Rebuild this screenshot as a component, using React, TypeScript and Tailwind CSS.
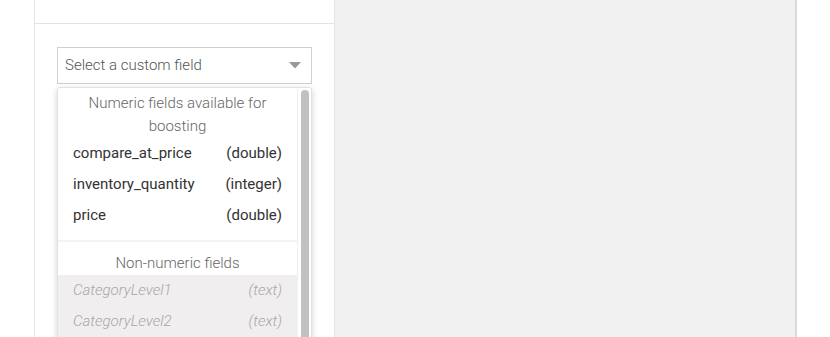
import React from "react";

const numeric = [
  { name: "compare_at_price", type: "(double)" },
  { name: "inventory_quantity", type: "(integer)" },
  { name: "price", type: "(double)" },
];

const other = [
  { name: "CategoryLevel1", type: "(text)" },
  { name: "CategoryLevel2", type: "(text)" },
];

export default function App() {
  return (
    <div
      className="flex w-[830px] h-[337px] overflow-hidden bg-white text-[#333]"
      style={{ fontFamily: "Roboto, 'Liberation Sans', sans-serif" }}
    >
      <div className="w-[34px] shrink-0" />

      {/* settings panel */}
      <div className="w-[301px] shrink-0 border-l border-r border-[#e6e6e6] bg-white">
        <div className="h-[24px] border-b border-[#e3e3e3]" />
        <div className="pt-[23px] pl-[22px]">
          <div className="relative w-[255px]">
            <div className="flex h-[37px] items-center justify-between border border-[#cfcfcf] bg-white pl-[7px] pr-[10px]">
              <span className="text-[15px] font-light text-[#555]">Select a custom field</span>
              <svg width="12" height="7" viewBox="0 0 12 7">
                <path d="M0 0h12L6 6.5z" fill="#999" />
              </svg>
            </div>

            <div className="absolute left-0 top-[40px] flex h-[300px] w-[255px] rounded-[3px] border border-[#e2e2e2] bg-white shadow-[0_2px_6px_rgba(0,0,0,0.18)]">
              <div className="flex-1">
                <div className="px-[14px] pt-[4px] text-center text-[15px] font-light leading-[23px] text-[#666]">
                  Numeric fields available for boosting
                </div>
                {numeric.map((f) => (
                  <div
                    key={f.name}
                    className="flex h-[31px] items-center justify-between pl-[15px] pr-[15px] text-[15px] text-[#333]"
                  >
                    <span>{f.name}</span>
                    <span>{f.type}</span>
                  </div>
                ))}
                <div className="mt-[9px] h-[2px] bg-[#f3f3f3]" />
                <div className="pt-[10px] text-center text-[15px] font-light leading-[23px] text-[#666]">
                  Non-numeric fields
                </div>
                <div className="bg-[#f0eeee]">
                  {other.map((f) => (
                    <div
                      key={f.name}
                      className="flex h-[31px] items-center justify-between pl-[15px] pr-[15px] text-[15px] font-light italic text-[#a8a8a8]"
                    >
                      <span>{f.name}</span>
                      <span>{f.type}</span>
                    </div>
                  ))}
                  <div className="h-[10px]" />
                </div>
              </div>
              <div className="flex w-[14px] justify-center border-l border-[#f0f0f0] pt-[2px]">
                <div className="h-[400px] w-[8px] rounded-[4px] bg-[#c1c1c1]" />
              </div>
            </div>
          </div>
        </div>
      </div>

      {/* preview area */}
      <div className="w-[462px] shrink-0 border-r-2 border-[#dadada] bg-[#f0f0f0]" />
      <div className="flex-1" />
    </div>
  );
}
